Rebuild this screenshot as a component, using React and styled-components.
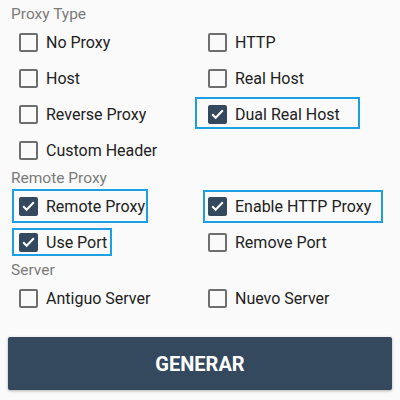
import React from "react";
import styled, { createGlobalStyle } from "styled-components";

const GlobalStyle = createGlobalStyle`
  body {
    margin: 0;
    background: #fafafa;
    font-family: Roboto, "Liberation Sans", sans-serif;
  }
`;

const Page = styled.div`
  width: 400px;
  height: 400px;
  padding: 4px 8px 0;
  box-sizing: border-box;
  display: flex;
  flex-direction: column;
`;

const SectionLabel = styled.div`
  height: 20px;
  line-height: 20px;
  padding-left: 3px;
  font-size: 15.5px;
  color: #7a7a7a;
`;

const Grid = styled.div`
  display: grid;
  grid-template-columns: 189px 1fr;
  padding-left: 11px;
`;

const Item = styled.label`
  position: relative;
  display: flex;
  align-items: center;
  height: 36px;
  gap: 8px;
  font-size: 16px;
  color: #212121;

  ${({ $hl }) =>
    $hl &&
    `
    &::before {
      content: "";
      position: absolute;
      left: ${$hl.left}px;
      top: ${$hl.top}px;
      width: ${$hl.width}px;
      height: ${$hl.height}px;
      border: 2px solid #1d9fe4;
      box-sizing: border-box;
      pointer-events: none;
    }
  `}
`;

const Box = styled.span`
  width: 19px;
  height: 19px;
  box-sizing: border-box;
  border-radius: 2px;
  border: 2px solid ${({ $checked }) => ($checked ? "#34495e" : "#6e6e6e")};
  background: ${({ $checked }) => ($checked ? "#34495e" : "transparent")};
  display: flex;
  align-items: center;
  justify-content: center;
  flex-shrink: 0;
`;

const Button = styled.button`
  margin-top: 21px;
  height: 53px;
  width: 384px;
  border: none;
  border-radius: 2px;
  background: #34495e;
  color: #fff;
  font-family: Roboto, "Liberation Sans", sans-serif;
  font-weight: 700;
  font-size: 20px;
  box-shadow: 0 1px 3px rgba(0, 0, 0, 0.3);
`;

const Check = ({ label, checked, hl }) => (
  <Item $hl={hl}>
    <Box $checked={checked}>
      {checked && (
        <svg width="16" height="16" viewBox="0 0 24 24">
          <path
            d="M3.5 12.5l5.5 5.5L20.5 6"
            fill="none"
            stroke="#fff"
            strokeWidth="3.2"
          />
        </svg>
      )}
    </Box>
    {label}
  </Item>
);

export default function App() {
  return (
    <>
      <GlobalStyle />
      <Page>
        <SectionLabel>Proxy Type</SectionLabel>
        <Grid>
          <Check label="No Proxy" />
          <Check label="HTTP" />
          <Check label="Host" />
          <Check label="Real Host" />
          <Check label="Reverse Proxy" />
          <Check
            label="Dual Real Host"
            checked
            hl={{ left: -13, top: 1, width: 165, height: 32 }}
          />
          <Check label="Custom Header" />
        </Grid>
        <SectionLabel>Remote Proxy</SectionLabel>
        <Grid>
          <Check
            label="Remote Proxy"
            checked
            hl={{ left: -7, top: 1, width: 136, height: 34 }}
          />
          <Check
            label="Enable HTTP Proxy"
            checked
            hl={{ left: -5, top: 2, width: 180, height: 33 }}
          />
          <Check
            label="Use Port"
            checked
            hl={{ left: -7, top: 4, width: 100, height: 28 }}
          />
          <Check label="Remove Port" />
        </Grid>
        <SectionLabel>Server</SectionLabel>
        <Grid>
          <Check label="Antiguo Server" />
          <Check label="Nuevo Server" />
        </Grid>
        <Button>GENERAR</Button>
      </Page>
    </>
  );
}
